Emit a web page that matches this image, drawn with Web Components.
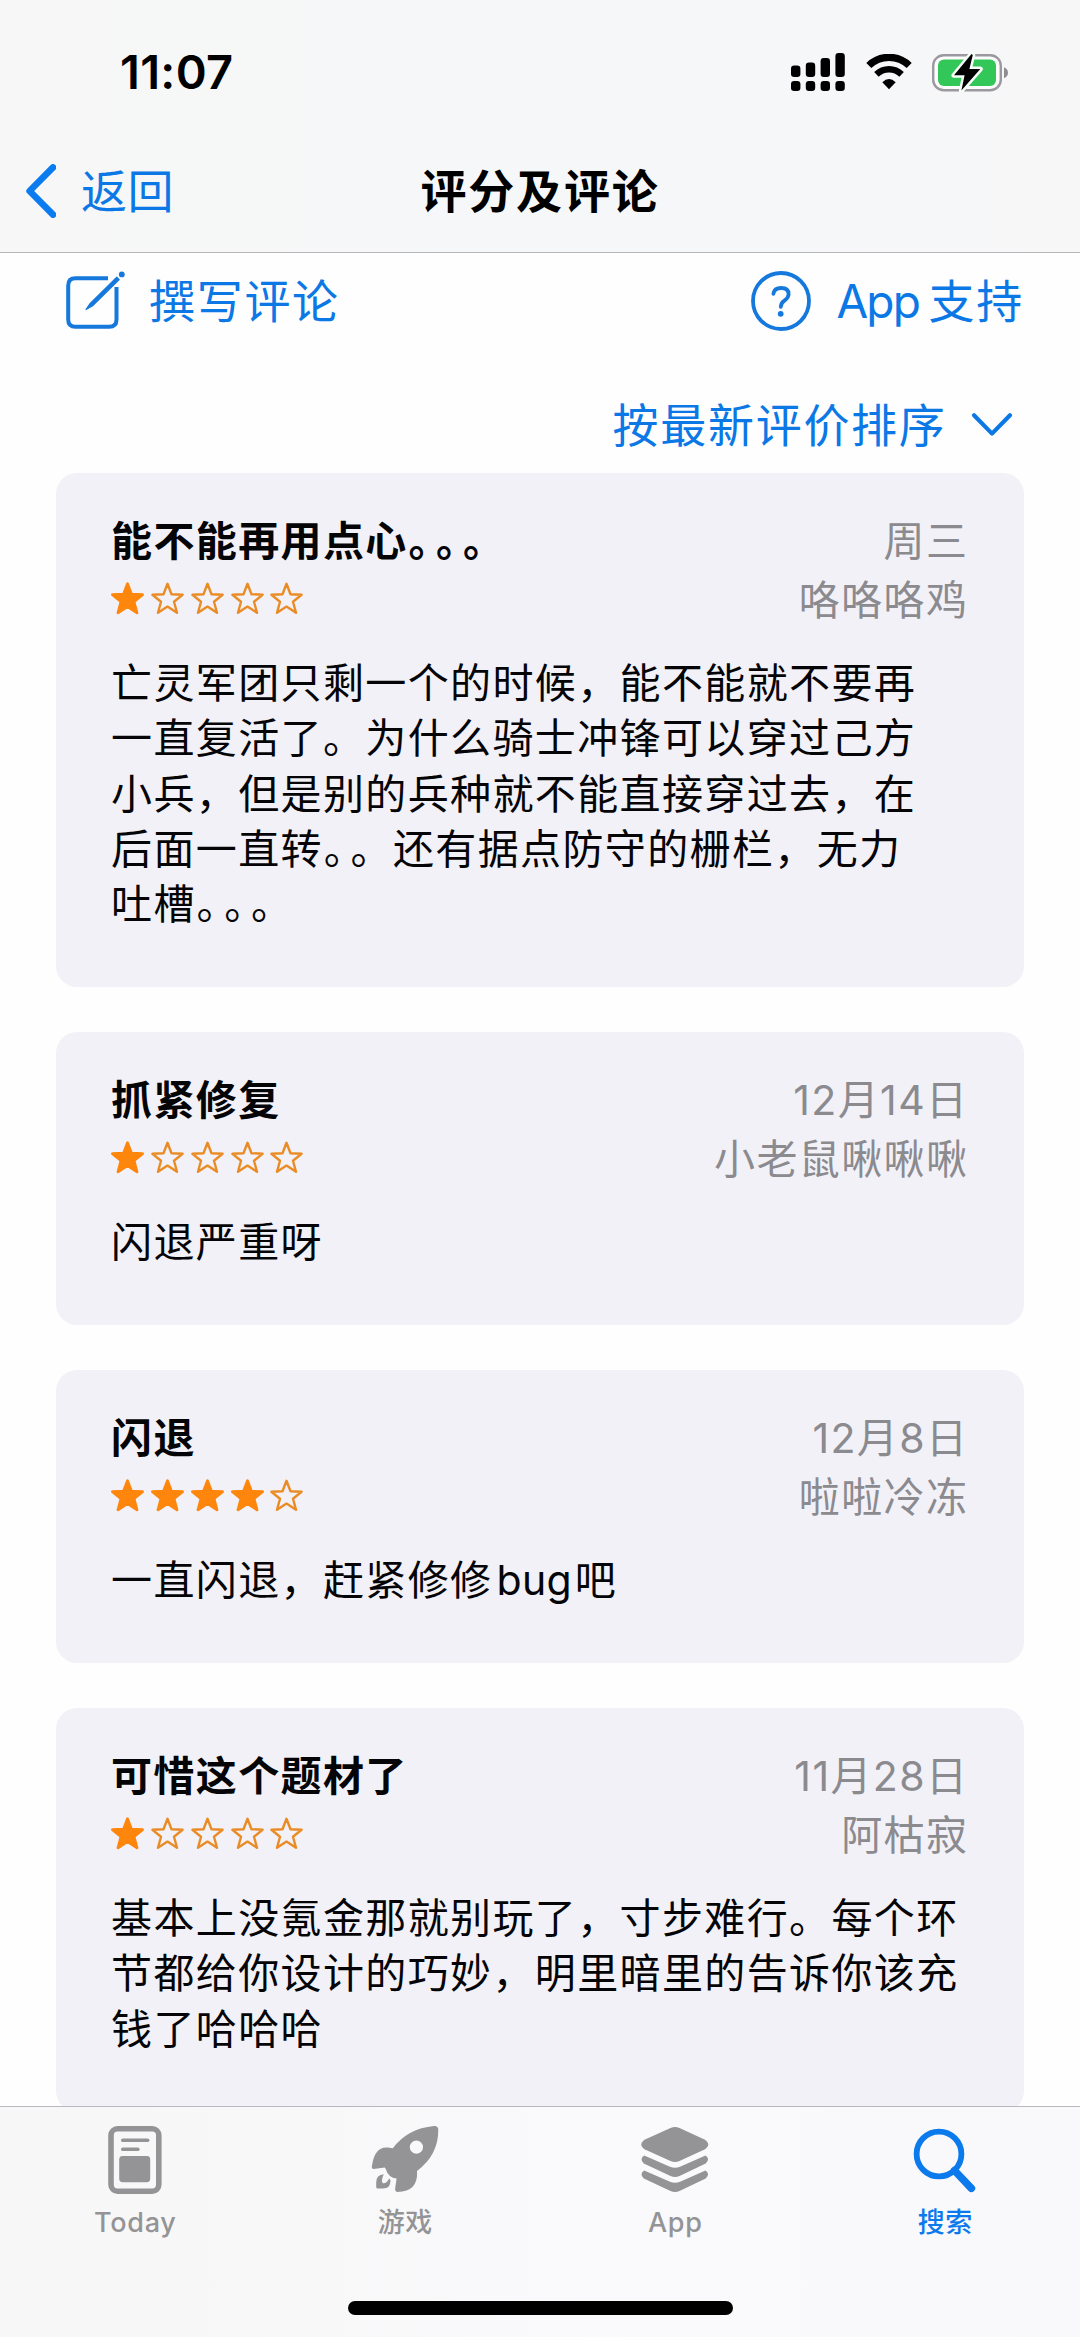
<!DOCTYPE html>
<html lang="zh-CN">
<head>
<meta charset="utf-8">
<title>评分及评论</title>
<style>
  html, body { margin: 0; background: #fefefe; }
  body {
    font-family: Inter, "Noto Sans CJK SC", sans-serif;
    color: #050507;
    text-spacing-trim: space-all;
    font-kerning: normal;
    --blue: #0b78e6;
    --gray: #949496;
  }
</style>
</head>
<body>
<ratings-page></ratings-page>

<script>
const define = (name, html, init) => {
  const tpl = document.createElement('template');
  tpl.innerHTML = html;
  customElements.define(name, class extends HTMLElement {
    constructor() {
      super();
      this.attachShadow({ mode: 'open' }).appendChild(tpl.content.cloneNode(true));
    }
    connectedCallback() { if (init) init(this, this.shadowRoot); }
  });
};

define('status-bar', `
<style>
  :host { display: flex; align-items: center; height: 144px; padding: 0 72px 0 120px; box-sizing: border-box; }
  .time { font-size: 47px; font-weight: 600; line-height: 60px; letter-spacing: 0.3px; margin-right: auto; color: #000; }
  svg { display: block; }
</style>
<span class="time">11:07</span>
<svg width="54" height="38" viewBox="0 0 54 38" style="margin-right:21px">
  <rect x="0" y="12.5" width="9.4" height="11.5" rx="3.2"/><rect x="14.8" y="9.5" width="9.4" height="14.5" rx="3.2"/>
  <rect x="29.6" y="5" width="9.4" height="19" rx="3.2"/><rect x="44.4" y="0" width="9.4" height="24" rx="3.2"/>
  <rect x="0" y="28" width="9.4" height="10" rx="3.2"/><rect x="14.8" y="28" width="9.4" height="10" rx="3.2"/>
  <rect x="29.6" y="28" width="9.4" height="10" rx="3.2"/><rect x="44.4" y="28" width="9.4" height="10" rx="3.2"/>
</svg>
<svg width="46" height="36" viewBox="0 0 46 36" style="margin-right:20px">
  <path d="M2.8 11.5A29 29 0 0 1 43.2 11.5" fill="none" stroke="#000" stroke-width="7.2"/>
  <path d="M10.4 20.4A18 18 0 0 1 35.6 20.4" fill="none" stroke="#000" stroke-width="6.4"/>
  <path d="M16.3 28.2Q23 22 29.7 28.2L23 35.2Z"/>
</svg>
<svg width="76" height="40" viewBox="0 0 76 40">
  <rect x="1.2" y="3.2" width="67.6" height="35" rx="10.5" fill="#fbfcfb" stroke="#9c98a0" stroke-width="2.4"/>
  <rect x="6" y="7.6" width="58" height="26.4" rx="6" fill="#33c759"/>
  <path d="M72 15.3Q76 17 76 20.7T72 26.2Z" fill="#8f8d93"/>
  <path d="M39.5 2 22 23.3H32.6L29.4 38.6 48.3 17H37.4L40.8 3Z" fill="#000" stroke="#f7fdf8" stroke-width="5" stroke-linejoin="round" paint-order="stroke"/>
</svg>`);

define('nav-bar', `
<style>
  :host { display: grid; grid-template-columns: 1fr auto 1fr; align-items: center; height: 94px; margin-bottom: 14px; padding: 0 26px; }
  .back { display: flex; align-items: center; gap: 25px; color: var(--blue); font-size: 46px; letter-spacing: 0.4px; line-height: 60px; }
  .title { font-size: 46px; font-weight: 600; letter-spacing: 1.8px; line-height: 60px; color: #000; }
  svg { display: block; }
</style>
<div class="back">
  <svg width="30" height="54" viewBox="0 0 30 54"><path d="M27 3.4 3.6 27 27 50.6" fill="none" stroke="#0b7cf0" stroke-width="6.6" stroke-linecap="round" stroke-linejoin="round"/></svg>
  <span>返回</span>
</div>
<div class="title"><slot></slot></div>`);

define('page-actions', `
<style>
  :host { display: block; color: var(--blue); font-size: 46px; line-height: 60px; height: 220px; }
  .row { display: flex; align-items: center; height: 96px; padding: 0 56px 0 66px; }
  .sort { justify-content: flex-end; margin-top: 28px; padding-right: 67px; }
  .cjk { letter-spacing: 1.7px; }
  .app { letter-spacing: -1.8px; margin-right: 9.5px; }
  svg { display: block; flex: none; }
</style>
<div class="row">
  <svg width="60" height="60" viewBox="0 0 60 60" style="margin-right:23px" fill="none" stroke="#1478dc" stroke-width="4">
    <path d="M42 7.2H9.5Q2.2 7.2 2.2 14.5V48.5Q2.2 55.8 9.5 55.8H43.2Q50.5 55.8 50.5 48.5V16"/>
    <path d="M50.8 6.2 24.2 32.4 20 38.6 26.6 34.8 53.2 8.6Z" fill="#1478dc" stroke-width="1.2" stroke-linejoin="round"/>
    <circle cx="55.8" cy="3.4" r="2.9" fill="#1478dc" stroke="none"/>
  </svg>
  <span class="cjk" style="margin-right:auto">撰写评论</span>
  <svg width="60" height="60" viewBox="0 0 60 60" style="margin-right:25.5px" fill="none" stroke="#1478dc">
    <circle cx="30" cy="30" r="28" stroke-width="3.8"/>
    <path d="M22.4 22.8Q23.2 17 30.2 17Q37.6 17 37.6 23.2Q37.6 26.6 33.4 29.6Q29.8 32 29.8 35.8" stroke-width="3.8" stroke-linecap="round"/>
    <circle cx="29.7" cy="42.8" r="2.9" fill="#1478dc" stroke="none"/>
  </svg>
  <span class="app">App</span><span class="cjk">支持</span>
</div>
<div class="row sort">
  <span class="cjk" style="margin-right:24.5px">按最新评价排序</span>
  <svg width="42" height="26" viewBox="0 0 42 26"><path d="M3 3.2 21 21.6 39 3.2" fill="none" stroke="#0b78e6" stroke-width="4.2" stroke-linecap="round" stroke-linejoin="round"/></svg>
</div>`);

const STAR = 'M16.5 1.8 20.5 12.2 31.600 12.7 23 19.7 26 30.8 16.5 24.6 7 30.8 10 19.7 1.4 12.7 12.5 12.2Z';
define('star-rating', `
<style>
  :host, .stars { display: flex; }
  .stars { gap: 6.75px; margin: -3.6px 0 0 0.3px; }
  svg { display: block; width: 33px; height: 33px; overflow: visible; }
  path { fill: none; stroke: #ea8c26; stroke-width: 2.4; stroke-linejoin: round; }
  .on path { fill: #fe860c; stroke: #fe860c; stroke-width: 2.8; }
</style><div class="stars"></div>`, (el, root) => {
  const n = Number(el.getAttribute('value'));
  root.querySelector('.stars').innerHTML = [0, 1, 2, 3, 4].map(i =>
    `<svg viewBox="0 0 33 33" class="${i < n ? 'on' : ''}"><path d="${STAR}"/></svg>`).join('');
});

define('review-card', `
<style>
  :host { display: block; box-sizing: border-box; flex: none; margin: 0 56px; padding: 39px 57px 54.7px 55px; border-radius: 21px; background: #f2f1f7; font-size: 41px; letter-spacing: 1.38px; }
  .row { display: flex; align-items: center; justify-content: space-between; height: 59px; line-height: 59px; white-space: nowrap; }
  .title { font-weight: 700; }
  .meta { color: #8b8a8f; margin-right: -1.38px; }
  .body { margin-top: 26px; line-height: 55.3px; white-space: nowrap; }
</style>
<div class="row"><span class="title"><slot name="title"></slot></span><span class="meta"><slot name="date"></slot></span></div>
<div class="row"><star-rating></star-rating><span class="meta"><slot name="author"></slot></span></div>
<div class="body"><slot></slot></div>`, (el, root) => {
  const old = root.querySelector('star-rating');
  const stars = document.createElement('star-rating');
  stars.setAttribute('value', el.getAttribute('stars'));
  old.replaceWith(stars);
});

/* Full stop in a run of stops, set closer to the one that follows it. */
define('tight-stop', `<style>:host { display: inline; margin-left: 0.8px; letter-spacing: -14.2px; }</style>。`);

/* Latin word inside Chinese text, with a little air on both sides. */
define('latin-word', `<style>:host { display: inline; margin: 0 2.6px 0 4px; letter-spacing: 0.4px; }</style><slot></slot>`);

define('tab-item', `
<style>
  :host { display: flex; flex-direction: column; align-items: center; flex: 1; color: var(--gray); padding-top: 16px; }
  :host([active]) { color: #0b7aec; }
  .label { font-size: 27px; line-height: 32px; font-weight: 500; letter-spacing: 0.7px; margin: 10px -0.7px 0 0; }
  ::slotted(svg) { display: block; width: 72px; height: 74px; }
</style>
<slot name="icon"></slot><span class="label"><slot></slot></span>`);

define('tab-bar', `
<style>
  :host { display: flex; flex-direction: column; box-sizing: border-box; height: 231px; flex: none; border-top: 1px solid #b9b8be; background: linear-gradient(90deg, #f8f7f7, #faf9fb 55%, #f9f9fb); }
  .tabs { display: flex; height: 194px; }
  .home { width: 385px; height: 14px; border-radius: 7px; background: #000; margin: 0 auto; }
</style>
<div class="tabs"><slot></slot></div><div class="home"></div>`);

define('ratings-page', `
<style>
  :host { display: flex; flex-direction: column; width: 1080px; height: 2337px; overflow: hidden; background: #fefefe; }
  header { height: 253px; box-sizing: border-box; flex: none; border-bottom: 1px solid #b7b6bb; background: linear-gradient(90deg, #f7f7f7, #f6f7f9 60%, #f7f7f8); }
  main { flex: 1; min-height: 0; overflow: hidden; display: flex; flex-direction: column; }
  .list { display: flex; flex-direction: column; gap: 45px; }
</style>
<header><status-bar></status-bar><nav-bar>评分及评论</nav-bar></header>
<main>
  <page-actions></page-actions>
  <div class="list">
    <review-card stars="1">
      <span slot="title">能不能再用点心<tight-stop></tight-stop><tight-stop></tight-stop>。</span><span slot="date">周三</span><span slot="author">咯咯咯鸡</span>
      亡灵军团只剩一个的时候，能不能就不要再<br>一直复活了。为什么骑士冲锋可以穿过己方<br>小兵，但是别的兵种就不能直接穿过去，在<br>后面一直转<tight-stop></tight-stop>。还有据点防守的栅栏，无力<br>吐槽<tight-stop></tight-stop><tight-stop></tight-stop>。
    </review-card>
    <review-card stars="1">
      <span slot="title">抓紧修复</span><span slot="date">12月14日</span><span slot="author">小老鼠啾啾啾</span>
      闪退严重呀
    </review-card>
    <review-card stars="4">
      <span slot="title">闪退</span><span slot="date">12月8日</span><span slot="author">啦啦冷冻</span>
      一直闪退，赶紧修修<latin-word>bug</latin-word>吧
    </review-card>
    <review-card stars="1">
      <span slot="title">可惜这个题材了</span><span slot="date">11月28日</span><span slot="author">阿枯寂</span>
      基本上没氪金那就别玩了，寸步难行。每个环<br>节都给你设计的巧妙，明里暗里的告诉你该充<br>钱了哈哈哈
    </review-card>
  </div>
</main>
<tab-bar>
  <tab-item>
    <svg slot="icon" viewBox="0 0 72 74" fill="currentColor">
      <rect x="12" y="5.8" width="47.8" height="62.4" rx="6.5" fill="none" stroke="currentColor" stroke-width="5.6"/>
      <rect x="22" y="15.4" width="28.4" height="3.7" rx="1.85"/><rect x="22" y="24.4" width="18.6" height="3.7" rx="1.85"/>
      <rect x="20.2" y="33" width="31" height="26.2" rx="3.4"/>
    </svg>Today
  </tab-item>
  <tab-item>
    <svg slot="icon" viewBox="0 0 72 74" fill="currentColor">
      <path fill-rule="evenodd" d="M65 3Q69 2.6 69.3 6.6Q69.5 32 48 48Q49.5 68.5 28.3 69Q25.600 68.600 26.200 65L27.600 55.400Q19.500 55.200 16.600 45.800L15.800 44.600 4.500 46Q2.700 46 2.800 44Q5.200 23.300 19 24.600L23.800 25.300Q38.500 5.500 65 3ZM47.400 17.600A6.600 6.600 0 1 0 47.400 30.800A6.600 6.600 0 1 0 47.400 17.600Z"/>
      <path d="M14.8 51.2Q7.200 51.500 7.200 59.500V64Q7.200 65.600 9 65.600H14Q21.500 65.600 21.500 57.500L20.300 55.300Q18 60.500 14 60.300Q11.500 58 14.800 51.200Z"/>
    </svg>游戏
  </tab-item>
  <tab-item>
    <svg slot="icon" viewBox="0 0 72 74" fill="currentColor">
      <path d="M31.500 5Q36 3 40.500 5L65.500 16.500Q73 21.500 65.500 26.500L40.500 38Q36 40 31.500 38L6 26.500Q-1.500 21.500 6 16.500Z"/>
      <path d="M5.200 32.500Q0 36 4.800 40.500L31.500 53Q36 54.800 40.500 53L66.700 40.500Q71.500 36 66.500 32.500L41 43.800Q36 45.600 31 43.800Z"/>
      <path d="M5.200 47.500Q0 51 4.800 55.500L31.500 68Q36 69.800 40.500 68L66.700 55.500Q71.500 51 66.500 47.500L41 58.800Q36 60.600 31 58.800Z"/>
    </svg>App
  </tab-item>
  <tab-item active>
    <svg slot="icon" viewBox="0 0 72 74" fill="none" stroke="currentColor">
      <circle cx="30" cy="31" r="22.400" stroke-width="5.800"/><path d="M45.500 47.500 62.400 65.300" stroke-width="7.600" stroke-linecap="round"/>
    </svg>搜索
  </tab-item>
</tab-bar>`);
</script>
</body>
</html>
